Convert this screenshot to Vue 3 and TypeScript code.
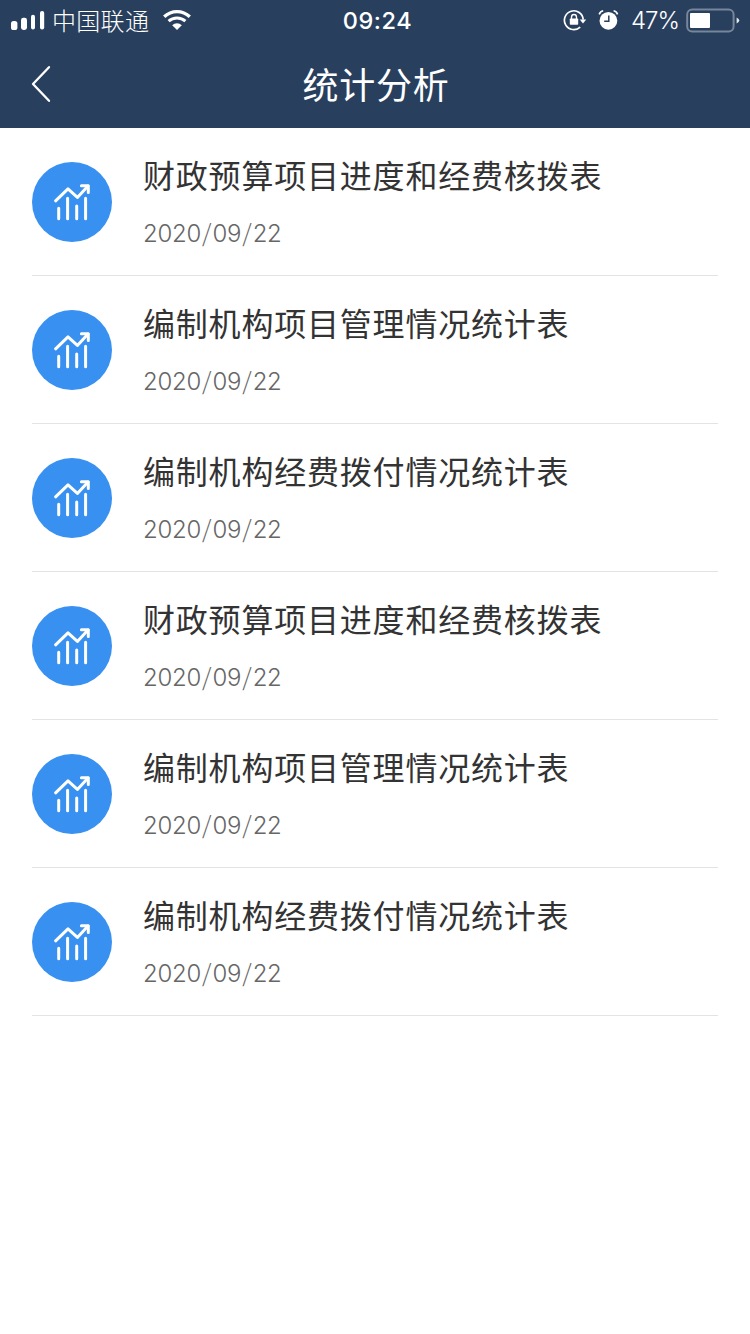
<script setup lang="ts">
interface Report {
  id: number
  title: string
  date: [string, string, string]
}

const titles: string[] = [
  '财政预算项目进度和经费核拨表',
  '编制机构项目管理情况统计表',
  '编制机构经费拨付情况统计表',
]

const reports: Report[] = [...titles, ...titles].map((title, id) => ({
  id,
  title,
  date: ['2020', '09', '22'],
}))
</script>

<template>
  <div class="screen">
    <header class="header">
      <div class="status">
        <div class="status-left">
          <svg class="signal" width="36" height="22" viewBox="0 0 36 22" fill="#fff">
            <rect x="1" y="12" width="6.4" height="9" rx="2.6" />
            <rect x="11" y="8.8" width="6" height="12.2" rx="2.4" />
            <rect x="21" y="5.7" width="4" height="14.9" rx="2" />
            <rect x="30" y="2" width="4.2" height="18.6" rx="2" />
          </svg>
          <span class="carrier">中国联通</span>
          <svg class="wifi" width="30" height="22" viewBox="0 0 30 22">
            <path d="M2.2 7.8C9.4 .8 20.6 .8 27.8 7.8" fill="none" stroke="#fff" stroke-width="3.3" />
            <path d="M6.6 12.2C11.4 7.8 18.6 7.8 23.4 12.2" fill="none" stroke="#fff" stroke-width="3" />
            <path d="M10.2 16.2C12.9 13.5 17.1 13.5 19.8 16.2L15 21Z" fill="#fff" />
          </svg>
        </div>
        <span class="clock">09:24</span>
        <div class="status-right">
          <svg class="lock" width="24" height="22" viewBox="0 0 24 22">
            <path d="M17.2 18.1A9.4 9.4 0 1 1 20.2 10.6" fill="none" stroke="#fff" stroke-width="1.7" />
            <path d="M16.7 10.4H23.2L20 14.6Z" fill="#fff" />
            <path d="M8.5 10V8.2a2.5 2.7 0 0 1 5 0V10" fill="none" stroke="#fff" stroke-width="1.4" />
            <rect x="6.8" y="9.4" width="8.4" height="6.4" rx="0.8" fill="#fff" />
          </svg>
          <svg class="alarm" width="21" height="22" viewBox="0 0 21 22">
            <circle cx="10.4" cy="11.8" r="8.9" fill="#fff" />
            <path d="M1.2 5.4Q2.3 2.4 5.2 1.8M19.6 5.4Q18.5 2.4 15.6 1.8" fill="none" stroke="#fff" stroke-width="1.6" />
            <path d="M10.8 6.4V12.3H6.2" fill="none" stroke="#293f5e" stroke-width="1.5" />
          </svg>
          <span class="percent">47%</span>
          <svg class="battery" width="54" height="26" viewBox="0 0 54 26">
            <rect x="1.2" y="2.4" width="46.4" height="22" rx="5" fill="none" stroke="#77869a" stroke-width="2" />
            <rect x="4" y="6" width="20" height="15" rx="1" fill="#fff" />
            <path d="M50.6 10.4Q53.3 11.8 53.3 13.4T50.6 16.6Z" fill="#e5e9ee" />
          </svg>
        </div>
      </div>
      <div class="nav">
        <button class="back" aria-label="返回">
          <svg width="22" height="40" viewBox="0 0 22 40">
            <path d="M19 3.2L3 20L19 36.8" fill="none" stroke="#fff" stroke-width="2.3" stroke-linecap="round" stroke-linejoin="round" />
          </svg>
        </button>
        <h1>统计分析</h1>
      </div>
    </header>
    <main class="list">
      <article v-for="report in reports" :key="report.id" class="item">
        <div class="badge">
          <svg width="80" height="80" viewBox="0 0 80 80" fill="none" stroke="#fff" stroke-width="3" stroke-linecap="round" stroke-linejoin="round">
            <path d="M23.6 38.8L36 26.8L45.4 35.4L56 24" />
            <path d="M49.4 23.7H56.3V30.6" />
            <path d="M26.7 46.3V56.8M35.6 36.2V56.8M44.7 44V56.8M53.6 36.2V56.8" />
          </svg>
        </div>
        <div class="info">
          <h2>{{ report.title }}</h2>
          <time><template v-for="(part, i) in report.date" :key="i"><span v-if="i > 0" class="slash">/</span>{{ part }}</template></time>
        </div>
      </article>
    </main>
  </div>
</template>

<style>
body {
  background: #fff;
}
</style>

<style scoped>
.screen {
  min-height: 1334px;
  background: #fff;
  font-family: 'Noto Sans CJK SC', sans-serif;
}
.header {
  height: 128px;
  background: #293f5e;
  color: #fff;
}
.status {
  display: grid;
  grid-template-columns: 1fr auto 1fr;
  align-items: center;
  height: 40px;
  padding: 0 10px 0 10px;
  line-height: 40px;
}
.status-left,
.status-right {
  display: flex;
  align-items: center;
  height: 40px;
}
.status-right {
  justify-content: flex-end;
}
.carrier {
  margin-left: 6px;
  font-size: 24px;
  font-weight: 300;
  letter-spacing: 0.3px;
}
.wifi {
  margin-left: 13px;
}
.clock {
  padding: 1px 0 0 5px;
  font-family: Inter, sans-serif;
  font-size: 23.5px;
  font-weight: 500;
  line-height: 39px;
  letter-spacing: 0.6px;
}
.alarm {
  margin-left: 11px;
}
.percent {
  margin-left: 12px;
  padding-top: 1px;
  font-family: Inter, sans-serif;
  font-size: 24px;
  font-weight: 350;
  line-height: 39px;
  letter-spacing: -1px;
}
.battery {
  margin-left: 7px;
}
.nav {
  display: grid;
  grid-template-columns: 120px 1fr 120px;
  align-items: center;
  height: 88px;
}
.back {
  display: flex;
  margin: 0 0 0 30px;
  padding: 0;
  border: 0;
  background: none;
}
h1 {
  margin: 0;
  padding-left: 2px;
  font-size: 36px;
  font-weight: 400;
  line-height: 86px;
  height: 88px;
  letter-spacing: 0.8px;
  text-align: center;
}
.list {
  padding: 0 32px;
}
.item {
  display: flex;
  box-sizing: border-box;
  height: 148px;
  padding-top: 34px;
  border-bottom: 1px solid #e3e3e3;
}
.badge {
  width: 80px;
  height: 80px;
  border-radius: 50%;
  background: #3890f1;
}
.info {
  margin: -12px 0 0 31px;
}
h2 {
  margin: 0;
  color: #333;
  font-size: 32px;
  font-weight: 400;
  line-height: 48px;
  letter-spacing: 0.8px;
}
time {
  display: block;
  height: 36px;
  margin-top: 18px;
  color: #666;
  font-family: Inter, sans-serif;
  font-size: 24px;
  font-weight: 300;
  line-height: 36px;
  letter-spacing: -0.3px;
}
.slash {
  padding: 0 1.2px;
  font-family: 'Noto Sans CJK SC', sans-serif;
  line-height: 1;
}
</style>
